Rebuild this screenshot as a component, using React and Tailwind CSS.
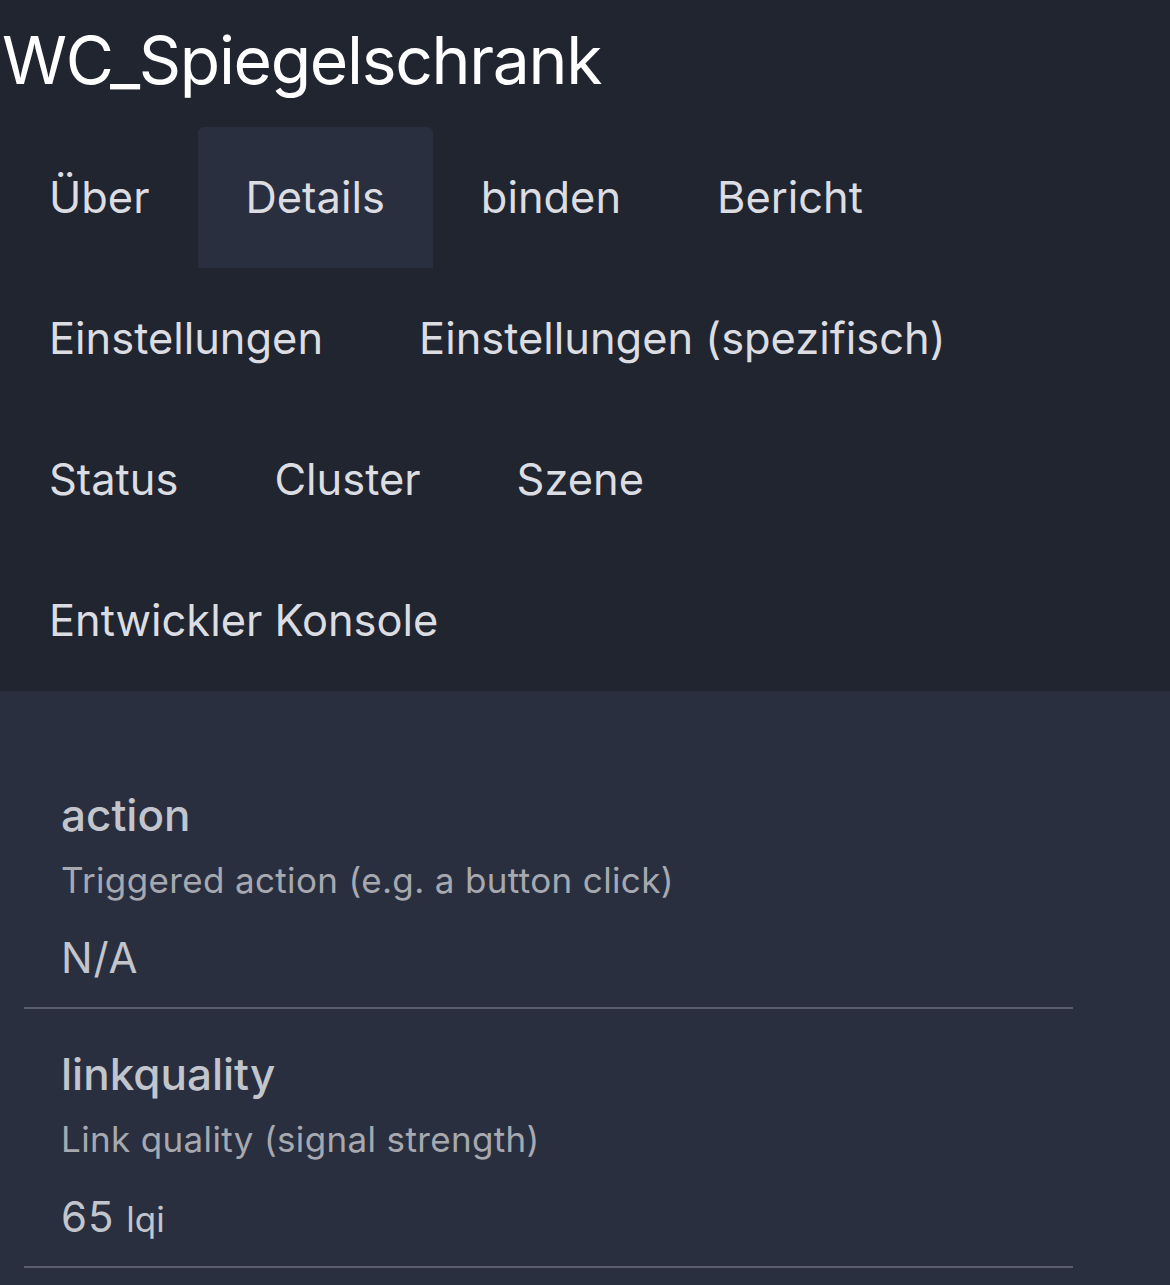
const tabs = [
    { label: 'Über' },
    { label: 'Details', active: true },
    { label: 'binden' },
    { label: 'Bericht' },
    { label: 'Einstellungen' },
    { label: 'Einstellungen (spezifisch)' },
    { label: 'Status' },
    { label: 'Cluster' },
    { label: 'Szene' },
    { label: 'Entwickler Konsole' },
];

const exposes = [
    { name: 'action', description: 'Triggered action (e.g. a button click)', value: 'N/A' },
    { name: 'linkquality', description: 'Link quality (signal strength)', value: '65', unit: 'lqi' },
    { name: 'battery', description: 'Remaining battery in %', value: '100', unit: '%' },
];

const ExposeRow = ({ name, description, value, unit }) => (
    <div className="w-[1049px] px-[37px] border-b-2 border-[#5b5e6b]">
        <div className="pt-[39px] text-[44px] leading-[52px] font-medium text-[#c3c5cc]">{name}</div>
        <div className="mt-[19px] text-[35px] leading-[40px] text-[#a7a9b1] tracking-[0.01em]">{description}</div>
        <div className="mt-[33px] mb-[24px] h-[50px] flex items-baseline text-[42px] leading-[50px] text-[#c3c5cc]">
            <span className="tracking-[0.02em]">{value}</span>
            {unit && <span className="ml-3 text-[35px] leading-[50px]">{unit}</span>}
        </div>
    </div>
);

const App = () => {
    return (
        <div className="min-h-screen bg-[#2a2f40] font-['Inter','Liberation_Sans',sans-serif]">
            <div className="bg-[#21252f]">
                <h1 className="pt-5 pl-[2px] text-[66px] leading-[80px] font-normal text-white tracking-[-0.02em]">
                    WC_Spiegelschrank
                </h1>
                <div className="mt-[27px] pl-px flex flex-wrap max-w-[1100px]">
                    {tabs.map((tab) => (
                        <div
                            key={tab.label}
                            className={
                                tab.active
                                    ? 'h-[141px] px-12 text-[43.4px] leading-[141px] text-[#dcdde2] bg-[#2a2f40] rounded-t-md whitespace-nowrap'
                                    : 'h-[141px] px-12 text-[43.4px] leading-[141px] text-[#dcdde2] whitespace-nowrap'
                            }
                        >
                            {tab.label}
                        </div>
                    ))}
                </div>
            </div>

            <div className="pt-[59px] pl-6">
                {exposes.map((item) => (
                    <ExposeRow key={item.name} {...item} />
                ))}
            </div>
        </div>
    );
};

export default App;
